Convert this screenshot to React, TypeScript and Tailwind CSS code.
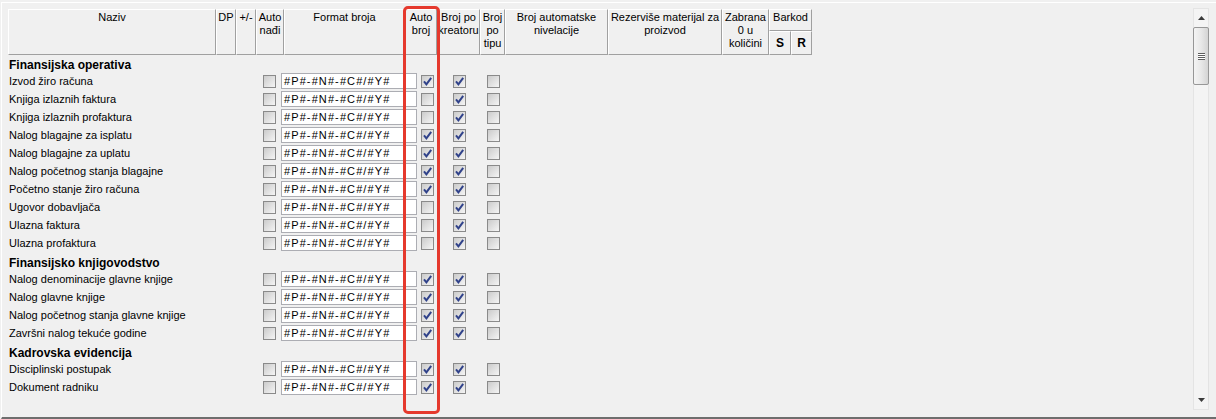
import React from 'react';

type Row = { name: string; autoBroj: boolean };
type Section = { title: string; rows: Row[] };

const sections: Section[] = [
  {
    title: 'Finansijska operativa',
    rows: [
      { name: 'Izvod žiro računa', autoBroj: true },
      { name: 'Knjiga izlaznih faktura', autoBroj: false },
      { name: 'Knjiga izlaznih profaktura', autoBroj: false },
      { name: 'Nalog blagajne za isplatu', autoBroj: true },
      { name: 'Nalog blagajne za uplatu', autoBroj: true },
      { name: 'Nalog početnog stanja blagajne', autoBroj: true },
      { name: 'Početno stanje žiro računa', autoBroj: true },
      { name: 'Ugovor dobavljača', autoBroj: false },
      { name: 'Ulazna faktura', autoBroj: false },
      { name: 'Ulazna profaktura', autoBroj: false },
    ],
  },
  {
    title: 'Finansijsko knjigovodstvo',
    rows: [
      { name: 'Nalog denominacije glavne knjige', autoBroj: true },
      { name: 'Nalog glavne knjige', autoBroj: true },
      { name: 'Nalog početnog stanja glavne knjige', autoBroj: true },
      { name: 'Završni nalog tekuće godine', autoBroj: true },
    ],
  },
  {
    title: 'Kadrovska evidencija',
    rows: [
      { name: 'Disciplinski postupak', autoBroj: true },
      { name: 'Dokument radniku', autoBroj: true },
    ],
  },
];

const headCols = [
  { w: 'w-[208px]', lines: ['Naziv'] },
  { w: 'w-[20px]', lines: ['DP'] },
  { w: 'w-[20px]', lines: ['+/-'] },
  { w: 'w-[28px]', lines: ['Auto', 'nađi'] },
  { w: 'w-[121px]', lines: ['Format broja'] },
  { w: 'w-[32px]', lines: ['Auto', 'broj'] },
  { w: 'w-[43px]', lines: ['Broj po', 'kreatoru'] },
  { w: 'w-[25px]', lines: ['Broj', 'po', 'tipu'] },
  { w: 'w-[103px]', lines: ['Broj automatske', 'nivelacije'] },
  { w: 'w-[114px]', lines: ['Rezerviše materijal za', 'proizvod'] },
  { w: 'w-[47px]', lines: ['Zabrana', '0 u', 'količini'] },
];

const raised =
  'border border-t-white border-l-white border-r-[#a0a0a0] border-b-[#a0a0a0]';

const HeadCell = ({ className, children }: { className: string; children: React.ReactNode }) => (
  <div className={`flex flex-col items-center overflow-hidden pt-px text-center leading-[13px] ${raised} ${className}`}>
    {children}
  </div>
);

const CheckBox = ({ checked }: { checked?: boolean }) => (
  <div className="flex h-[13px] w-[13px] shrink-0 items-center justify-center border border-[#8a8a8a] bg-gradient-to-br from-[#cbcbcb] to-[#f5f5f5]">
    {checked && (
      <svg width="9" height="9" viewBox="0 0 9 9" className="block">
        <path d="M1 4.3 L3.4 7.3 L8.2 0.8" fill="none" stroke="#30428a" strokeWidth="2" />
      </svg>
    )}
  </div>
);

const FormatInput = () => (
  <div className="ml-[5px] h-[16px] w-[136px] shrink-0 overflow-hidden whitespace-nowrap border border-[#acadb3] bg-white pl-[2px] text-[11px] leading-[14px] tracking-[1.1px] text-black">
    #P#-#N#-#C#/#Y#
  </div>
);

const Scrollbar = () => (
  <div className="mt-[5px] mr-[7px] flex h-[402px] w-[16px] shrink-0 flex-col items-center border border-[#e4e4e4] bg-[#f4f4f4]">
    <div className="flex h-[18px] w-full items-center justify-center">
      <svg width="7" height="4" viewBox="0 0 7 4">
        <polygon points="3.5,0 7,4 0,4" fill="#3a3a3a" />
      </svg>
    </div>
    <div className="flex h-[58px] w-[16px] items-center justify-center rounded-[2px] border border-[#979797] bg-gradient-to-r from-[#f4f4f4] via-[#e8e8e8] to-[#d4d4d4]">
      <div className="flex flex-col">
        <div className="h-px w-[7px] bg-[#5e5e5e]" />
        <div className="h-px w-[7px] bg-white" />
        <div className="h-px w-[7px] bg-[#5e5e5e]" />
        <div className="h-px w-[7px] bg-white" />
        <div className="h-px w-[7px] bg-[#5e5e5e]" />
        <div className="h-px w-[7px] bg-white" />
        <div className="h-px w-[7px] bg-[#5e5e5e]" />
      </div>
    </div>
    <div className="flex-1" />
    <div className="flex h-[18px] w-full items-center justify-center">
      <svg width="7" height="4" viewBox="0 0 7 4">
        <polygon points="0,0 7,0 3.5,4" fill="#3a3a3a" />
      </svg>
    </div>
  </div>
);

export default function App() {
  return (
    <div className="relative flex h-[419px] w-[1216px] flex-col overflow-hidden bg-[#f0f0f0] pl-px pt-[2px] font-['Liberation_Sans',Arial,sans-serif] text-[11px] text-black">
      <div className="flex flex-1 border-b-2 border-l border-t border-b-[#6e6e6e] border-l-white border-t-white">
        <div className="flex-1 pl-[6px] pt-[6px]">
          {/* column header */}
          <div className="flex h-[46px]">
            {headCols.map((c) => (
              <HeadCell key={c.lines.join(' ')} className={c.w}>
                {c.lines.map((l) => (
                  <div key={l} className="whitespace-nowrap">
                    {l}
                  </div>
                ))}
              </HeadCell>
            ))}
            <div className="flex w-[43px] flex-col">
              <HeadCell className="h-[22px] w-full">
                <div className="whitespace-nowrap">Barkod</div>
              </HeadCell>
              <div className="flex flex-1">
                <HeadCell className="w-[22px] justify-center pt-0 text-[12px] font-bold">S</HeadCell>
                <HeadCell className="w-[21px] justify-center pt-0 text-[12px] font-bold">R</HeadCell>
              </div>
            </div>
          </div>

          {/* rows */}
          <div className="-mt-px pl-px">
            {sections.map((s) => (
              <div key={s.title}>
                <div className="flex h-[18px] items-end text-[12px] font-bold leading-[14px]">{s.title}</div>
                {s.rows.map((r) => (
                  <div key={r.name} className="flex h-[18px] items-center">
                    <div className="w-[254px] shrink-0 whitespace-nowrap">{r.name}</div>
                    <CheckBox />
                    <FormatInput />
                    <div className="ml-[4px]">
                      <CheckBox checked={r.autoBroj} />
                    </div>
                    <div className="ml-[19px]">
                      <CheckBox checked />
                    </div>
                    <div className="ml-[21px]">
                      <CheckBox />
                    </div>
                  </div>
                ))}
              </div>
            ))}
          </div>
        </div>
        <Scrollbar />
      </div>

      {/* highlight around the Auto broj column */}
      <div className="absolute left-[403px] top-[6px] h-[408px] w-[37px] rounded-[5px] border-[3px] border-[#e5392d]" />
    </div>
  );
}
